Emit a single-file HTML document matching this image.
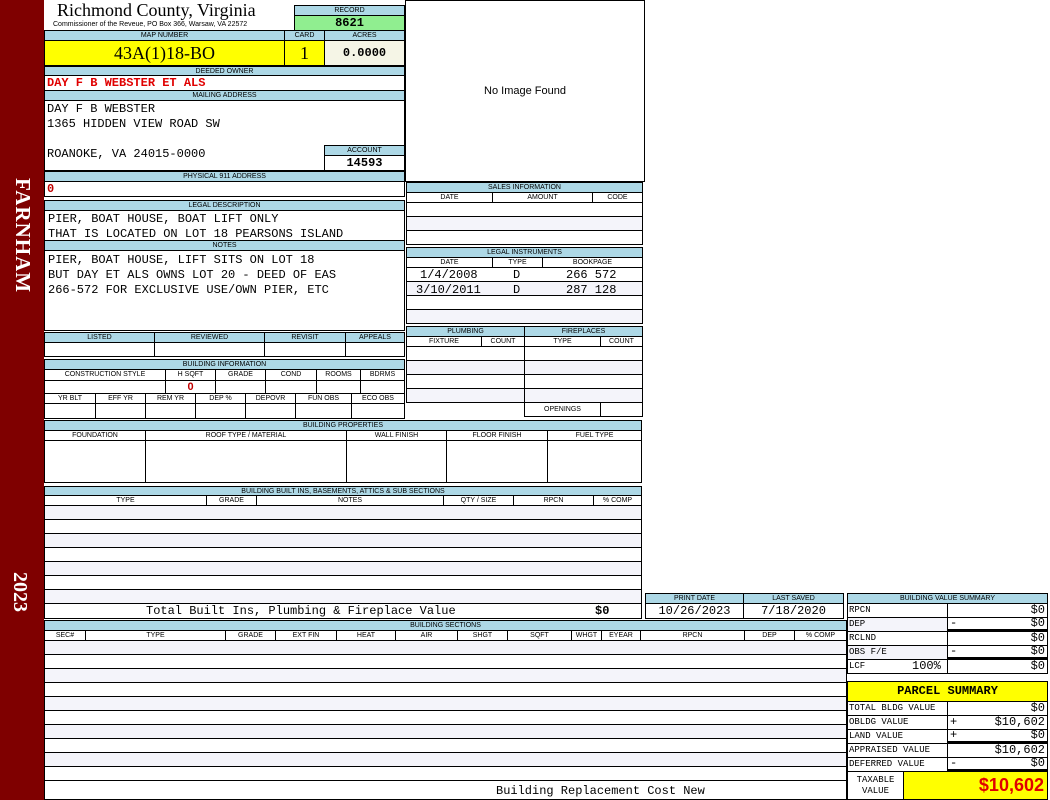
<!DOCTYPE html>
<html><head><meta charset="utf-8">
<style>
*{box-sizing:border-box;margin:0;padding:0}
body{width:1050px;height:800px;background:#fff;position:relative;overflow:hidden;font-family:"Liberation Sans",sans-serif}
div{position:absolute}
.b{border:1px solid #000;background:#fff}
.h{border:1px solid #000;background:#add8e6;font-size:7px;text-align:center;color:#000;line-height:10px;white-space:nowrap;overflow:hidden}
.s{border:1px solid #000;background:#fff;font-size:7px;text-align:center;line-height:10px;white-space:nowrap;overflow:hidden}
.g{background:#f4f4fa}
.m{font-family:"Liberation Mono",monospace;font-size:12px;white-space:pre;line-height:13px}
.r{text-align:right}
</style></head><body>
<div style="left:0;top:0;width:44px;height:800px;background:#7f0000"></div>
<div style="left:24px;top:178px;transform-origin:0 0;transform:rotate(90deg) translate(0,-11px);color:#fff;font-family:'Liberation Serif',serif;font-size:21px;font-weight:bold;letter-spacing:1px;white-space:nowrap">FARNHAM</div>
<div style="left:12px;top:572px;transform-origin:0 0;transform:rotate(90deg) translate(0,-19px);color:#fff;font-family:'Liberation Serif',serif;font-size:20px;font-weight:bold;white-space:nowrap">2023</div>

<div style="left:57px;top:0px;font-family:'Liberation Serif',serif;font-size:18px;line-height:20px">Richmond County, Virginia</div>
<div style="left:53px;top:21px;font-size:7px;line-height:8px;white-space:nowrap">Commissioner of the Reveue, PO Box 366, Warsaw, VA 22572</div>
<div class="h" style="left:294px;top:5px;width:111px;height:11px">RECORD</div>
<div class="b m" style="left:294px;top:15px;width:111px;height:16px;background:#90ee90;text-align:center;font-weight:bold;line-height:14px">8621</div>

<div class="h" style="left:44px;top:30px;width:241px;height:11px">MAP NUMBER</div>
<div class="h" style="left:284px;top:30px;width:41px;height:11px">CARD</div>
<div class="h" style="left:324px;top:30px;width:81px;height:11px">ACRES</div>
<div class="b" style="left:44px;top:40px;width:241px;height:26px;background:#ffff00;text-align:center;font-family:'Liberation Serif',serif;font-size:18px;line-height:24px">43A(1)18-BO</div>
<div class="b" style="left:284px;top:40px;width:41px;height:26px;background:#ffff00;text-align:center;font-family:'Liberation Serif',serif;font-size:18px;line-height:24px">1</div>
<div class="b m" style="left:324px;top:40px;width:81px;height:26px;background:#f5f5e6;text-align:center;font-weight:bold;line-height:24px">0.0000</div>

<div class="h" style="left:44px;top:66px;width:361px;height:10px;line-height:9px">DEEDED OWNER</div>
<div class="b m" style="left:44px;top:75px;width:361px;height:16px;color:#e00000;font-weight:bold;padding-left:2px;line-height:15px">DAY F B WEBSTER ET ALS</div>
<div class="h" style="left:44px;top:90px;width:361px;height:11px">MAILING ADDRESS</div>
<div class="b" style="left:44px;top:100px;width:361px;height:71px"></div>
<div class="m" style="left:47px;top:102px;line-height:15px">DAY F B WEBSTER
1365 HIDDEN VIEW ROAD SW

ROANOKE, VA 24015-0000</div>
<div class="h" style="left:324px;top:145px;width:81px;height:11px">ACCOUNT</div>
<div class="b m" style="left:324px;top:155px;width:81px;height:16px;text-align:center;font-weight:bold;line-height:14px">14593</div>
<div class="h" style="left:44px;top:171px;width:361px;height:11px">PHYSICAL 911 ADDRESS</div>
<div class="b m" style="left:44px;top:181px;width:361px;height:16px;color:#c00000;font-weight:bold;padding-left:2px;line-height:15px">0</div>

<div class="h" style="left:44px;top:200px;width:361px;height:11px">LEGAL DESCRIPTION</div>
<div class="b m" style="left:44px;top:210px;width:361px;height:31px;padding:1px 0 0 3px;line-height:15px">PIER, BOAT HOUSE, BOAT LIFT ONLY
THAT IS LOCATED ON LOT 18 PEARSONS ISLAND</div>
<div class="h" style="left:44px;top:240px;width:361px;height:11px">NOTES</div>
<div class="b m" style="left:44px;top:250px;width:361px;height:81px;padding:2px 0 0 3px;line-height:15px">PIER, BOAT HOUSE, LIFT SITS ON LOT 18
BUT DAY ET ALS OWNS LOT 20 - DEED OF EAS
266-572 FOR EXCLUSIVE USE/OWN PIER, ETC</div>

<div class="b" style="left:405px;top:0;width:240px;height:182px;text-align:center;font-size:11px;line-height:180px">No Image Found</div>

<div class="h" style="left:406px;top:182px;width:237px;height:11px">SALES INFORMATION</div>
<div class="s" style="left:406px;top:192px;width:87px;height:11px">DATE</div>
<div class="s" style="left:492px;top:192px;width:101px;height:11px">AMOUNT</div>
<div class="s" style="left:592px;top:192px;width:51px;height:11px">CODE</div>
<div class="b" style="left:406px;top:202px;width:237px;height:15px"></div>
<div class="b g" style="left:406px;top:216px;width:237px;height:15px"></div>
<div class="b" style="left:406px;top:230px;width:237px;height:15px"></div>

<div class="h" style="left:406px;top:247px;width:237px;height:11px">LEGAL INSTRUMENTS</div>
<div class="s" style="left:406px;top:257px;width:87px;height:11px">DATE</div>
<div class="s" style="left:492px;top:257px;width:51px;height:11px">TYPE</div>
<div class="s" style="left:542px;top:257px;width:101px;height:11px">BOOKPAGE</div>
<div class="b" style="left:406px;top:267px;width:237px;height:15px"></div>
<div class="b g" style="left:406px;top:281px;width:237px;height:15px"></div>
<div class="b" style="left:406px;top:295px;width:237px;height:15px"></div>
<div class="b g" style="left:406px;top:309px;width:237px;height:15px"></div>
<div class="m" style="left:420px;top:269px">1/4/2008</div><div class="m" style="left:513px;top:269px">D</div><div class="m" style="left:566px;top:269px">266 572</div>
<div class="m" style="left:416px;top:284px">3/10/2011</div><div class="m" style="left:513px;top:284px">D</div><div class="m" style="left:566px;top:284px">287 128</div>

<div class="h" style="left:406px;top:326px;width:119px;height:11px">PLUMBING</div>
<div class="h" style="left:524px;top:326px;width:119px;height:11px">FIREPLACES</div>
<div class="s" style="left:406px;top:336px;width:76px;height:11px">FIXTURE</div>
<div class="s" style="left:481px;top:336px;width:44px;height:11px">COUNT</div>
<div class="s" style="left:524px;top:336px;width:77px;height:11px">TYPE</div>
<div class="s" style="left:600px;top:336px;width:43px;height:11px">COUNT</div>
<div class="b" style="left:406px;top:346px;width:119px;height:15px"></div>
<div class="b g" style="left:406px;top:360px;width:119px;height:15px"></div>
<div class="b" style="left:406px;top:374px;width:119px;height:15px"></div>
<div class="b g" style="left:406px;top:388px;width:119px;height:15px"></div>
<div class="b" style="left:524px;top:346px;width:119px;height:15px"></div>
<div class="b g" style="left:524px;top:360px;width:119px;height:15px"></div>
<div class="b" style="left:524px;top:374px;width:119px;height:15px"></div>
<div class="b g" style="left:524px;top:388px;width:119px;height:15px"></div>
<div class="s" style="left:524px;top:402px;width:77px;height:15px;line-height:14px">OPENINGS</div>
<div class="b" style="left:600px;top:402px;width:43px;height:15px"></div>

<div class="h" style="left:44px;top:332px;width:111px;height:11px">LISTED</div>
<div class="h" style="left:154px;top:332px;width:111px;height:11px">REVIEWED</div>
<div class="h" style="left:264px;top:332px;width:82px;height:11px">REVISIT</div>
<div class="h" style="left:345px;top:332px;width:60px;height:11px">APPEALS</div>
<div class="b" style="left:44px;top:342px;width:111px;height:15px"></div>
<div class="b" style="left:154px;top:342px;width:111px;height:15px"></div>
<div class="b" style="left:264px;top:342px;width:82px;height:15px"></div>
<div class="b" style="left:345px;top:342px;width:60px;height:15px"></div>

<div class="h" style="left:44px;top:359px;width:361px;height:11px">BUILDING INFORMATION</div>
<div class="s" style="left:44px;top:369px;width:122px;height:12px">CONSTRUCTION STYLE</div>
<div class="s" style="left:165px;top:369px;width:51px;height:12px">H SQFT</div>
<div class="s" style="left:215px;top:369px;width:51px;height:12px">GRADE</div>
<div class="s" style="left:265px;top:369px;width:52px;height:12px">COND</div>
<div class="s" style="left:316px;top:369px;width:45px;height:12px">ROOMS</div>
<div class="s" style="left:360px;top:369px;width:45px;height:12px">BDRMS</div>
<div class="b" style="left:44px;top:380px;width:122px;height:14px"></div>
<div class="b" style="left:165px;top:380px;width:51px;height:14px;color:#c00000;font-weight:bold;font-size:11px;text-align:center;line-height:13px">0</div>
<div class="b" style="left:215px;top:380px;width:51px;height:14px"></div>
<div class="b" style="left:265px;top:380px;width:52px;height:14px"></div>
<div class="b" style="left:316px;top:380px;width:45px;height:14px"></div>
<div class="b" style="left:360px;top:380px;width:45px;height:14px"></div>
<div class="s" style="left:44px;top:393px;width:52px;height:11px">YR BLT</div>
<div class="s" style="left:95px;top:393px;width:51px;height:11px">EFF YR</div>
<div class="s" style="left:145px;top:393px;width:51px;height:11px">REM YR</div>
<div class="s" style="left:195px;top:393px;width:51px;height:11px">DEP %</div>
<div class="s" style="left:245px;top:393px;width:51px;height:11px">DEPOVR</div>
<div class="s" style="left:295px;top:393px;width:57px;height:11px">FUN OBS</div>
<div class="s" style="left:351px;top:393px;width:54px;height:11px">ECO OBS</div>
<div class="b" style="left:44px;top:403px;width:52px;height:16px"></div>
<div class="b" style="left:95px;top:403px;width:51px;height:16px"></div>
<div class="b" style="left:145px;top:403px;width:51px;height:16px"></div>
<div class="b" style="left:195px;top:403px;width:51px;height:16px"></div>
<div class="b" style="left:245px;top:403px;width:51px;height:16px"></div>
<div class="b" style="left:295px;top:403px;width:57px;height:16px"></div>
<div class="b" style="left:351px;top:403px;width:54px;height:16px"></div>

<div class="h" style="left:44px;top:420px;width:598px;height:11px">BUILDING PROPERTIES</div>
<div class="s" style="left:44px;top:430px;width:102px;height:11px">FOUNDATION</div>
<div class="s" style="left:145px;top:430px;width:202px;height:11px">ROOF TYPE / MATERIAL</div>
<div class="s" style="left:346px;top:430px;width:101px;height:11px">WALL FINISH</div>
<div class="s" style="left:446px;top:430px;width:102px;height:11px">FLOOR FINISH</div>
<div class="s" style="left:547px;top:430px;width:95px;height:11px">FUEL TYPE</div>
<div class="b" style="left:44px;top:440px;width:102px;height:43px"></div>
<div class="b" style="left:145px;top:440px;width:202px;height:43px"></div>
<div class="b" style="left:346px;top:440px;width:101px;height:43px"></div>
<div class="b" style="left:446px;top:440px;width:102px;height:43px"></div>
<div class="b" style="left:547px;top:440px;width:95px;height:43px"></div>

<div class="h" style="left:44px;top:486px;width:598px;height:10px;line-height:9px">BUILDING BUILT INS, BASEMENTS, ATTICS &amp; SUB SECTIONS</div>
<div class="s" style="left:44px;top:495px;width:163px;height:11px">TYPE</div>
<div class="s" style="left:206px;top:495px;width:51px;height:11px">GRADE</div>
<div class="s" style="left:256px;top:495px;width:188px;height:11px">NOTES</div>
<div class="s" style="left:443px;top:495px;width:71px;height:11px">QTY / SIZE</div>
<div class="s" style="left:513px;top:495px;width:81px;height:11px">RPCN</div>
<div class="s" style="left:593px;top:495px;width:49px;height:11px">% COMP</div>
<div class="b g" style="left:44px;top:505px;width:598px;height:15px"></div>
<div class="b" style="left:44px;top:519px;width:598px;height:15px"></div>
<div class="b g" style="left:44px;top:533px;width:598px;height:15px"></div>
<div class="b" style="left:44px;top:547px;width:598px;height:15px"></div>
<div class="b g" style="left:44px;top:561px;width:598px;height:15px"></div>
<div class="b" style="left:44px;top:575px;width:598px;height:15px"></div>
<div class="b g" style="left:44px;top:589px;width:598px;height:15px"></div>
<div class="b" style="left:44px;top:603px;width:598px;height:16px"></div>
<div class="m" style="left:146px;top:605px">Total Built Ins, Plumbing &amp; Fireplace Value</div>
<div class="m" style="left:595px;top:605px;font-weight:bold">$0</div>

<div class="h" style="left:645px;top:593px;width:99px;height:11px">PRINT DATE</div>
<div class="h" style="left:743px;top:593px;width:101px;height:11px">LAST SAVED</div>
<div class="b m" style="left:645px;top:603px;width:99px;height:16px;text-align:center;line-height:14px">10/26/2023</div>
<div class="b m" style="left:743px;top:603px;width:101px;height:16px;text-align:center;line-height:14px">7/18/2020</div>

<div class="h" style="left:44px;top:620px;width:803px;height:11px">BUILDING SECTIONS</div>
<div class="s" style="left:44px;top:630px;width:42px;height:11px">SEC#</div>
<div class="s" style="left:85px;top:630px;width:141px;height:11px">TYPE</div>
<div class="s" style="left:225px;top:630px;width:51px;height:11px">GRADE</div>
<div class="s" style="left:275px;top:630px;width:62px;height:11px">EXT FIN</div>
<div class="s" style="left:336px;top:630px;width:60px;height:11px">HEAT</div>
<div class="s" style="left:395px;top:630px;width:63px;height:11px">AIR</div>
<div class="s" style="left:457px;top:630px;width:51px;height:11px">SHGT</div>
<div class="s" style="left:507px;top:630px;width:65px;height:11px">SQFT</div>
<div class="s" style="left:571px;top:630px;width:31px;height:11px">WHGT</div>
<div class="s" style="left:601px;top:630px;width:40px;height:11px">EYEAR</div>
<div class="s" style="left:640px;top:630px;width:105px;height:11px">RPCN</div>
<div class="s" style="left:744px;top:630px;width:51px;height:11px">DEP</div>
<div class="s" style="left:794px;top:630px;width:53px;height:11px">% COMP</div>
<div class="b g" style="left:44px;top:640px;width:803px;height:15px"></div>
<div class="b" style="left:44px;top:654px;width:803px;height:15px"></div>
<div class="b g" style="left:44px;top:668px;width:803px;height:15px"></div>
<div class="b" style="left:44px;top:682px;width:803px;height:15px"></div>
<div class="b g" style="left:44px;top:696px;width:803px;height:15px"></div>
<div class="b" style="left:44px;top:710px;width:803px;height:15px"></div>
<div class="b g" style="left:44px;top:724px;width:803px;height:15px"></div>
<div class="b" style="left:44px;top:738px;width:803px;height:15px"></div>
<div class="b g" style="left:44px;top:752px;width:803px;height:15px"></div>
<div class="b" style="left:44px;top:766px;width:803px;height:15px"></div>
<div class="b" style="left:44px;top:780px;width:803px;height:20px"></div>
<div class="m" style="left:496px;top:785px">Building Replacement Cost New</div>

<div class="h" style="left:847px;top:593px;width:201px;height:11px">BUILDING VALUE SUMMARY</div>
<div class="b m" style="left:847px;top:603px;width:101px;height:15px;font-size:9px;padding-left:1px;line-height:13px">RPCN</div>
<div class="b m r" style="left:947px;top:603px;width:101px;height:15px;padding-right:2px;line-height:13px">$0</div>
<div class="b m g" style="left:847px;top:617px;width:101px;height:15px;font-size:9px;padding-left:1px;line-height:13px">DEP</div>
<div class="b m r" style="left:947px;top:617px;width:101px;height:15px;padding-right:2px;line-height:11px;border-bottom:3px solid #000">$0</div>
<div class="m" style="left:950px;top:617px">-</div>
<div class="b m" style="left:847px;top:631px;width:101px;height:15px;font-size:9px;padding-left:1px;line-height:13px">RCLND</div>
<div class="b m r" style="left:947px;top:631px;width:101px;height:15px;padding-right:2px;line-height:13px">$0</div>
<div class="b m g" style="left:847px;top:645px;width:101px;height:15px;font-size:9px;padding-left:1px;line-height:13px">OBS F/E</div>
<div class="b m r" style="left:947px;top:645px;width:101px;height:15px;padding-right:2px;line-height:11px;border-bottom:3px solid #000">$0</div>
<div class="m" style="left:950px;top:645px">-</div>
<div class="b m" style="left:847px;top:659px;width:101px;height:15px;font-size:9px;padding-left:1px;line-height:13px">LCF</div>
<div class="m" style="left:912px;top:660px">100%</div>
<div class="b m r" style="left:947px;top:659px;width:101px;height:15px;padding-right:2px;line-height:13px">$0</div>

<div class="b" style="left:847px;top:681px;width:201px;height:21px;background:#ffff00;text-align:center;font-family:'Liberation Mono',monospace;font-weight:bold;font-size:12px;line-height:19px">PARCEL SUMMARY</div>
<div class="b m" style="left:847px;top:701px;width:101px;height:15px;font-size:9px;padding-left:1px;line-height:13px">TOTAL BLDG VALUE</div>
<div class="b m r" style="left:947px;top:701px;width:101px;height:15px;padding-right:2px;line-height:13px">$0</div>
<div class="b m" style="left:847px;top:715px;width:101px;height:15px;font-size:9px;padding-left:1px;line-height:13px">OBLDG VALUE</div>
<div class="b m r" style="left:947px;top:715px;width:101px;height:15px;padding-right:2px;line-height:13px">$10,602</div>
<div class="m" style="left:950px;top:716px">+</div>
<div class="b m" style="left:847px;top:729px;width:101px;height:15px;font-size:9px;padding-left:1px;line-height:13px">LAND VALUE</div>
<div class="b m r" style="left:947px;top:729px;width:101px;height:15px;padding-right:2px;line-height:11px;border-bottom:3px solid #000">$0</div>
<div class="m" style="left:950px;top:729px">+</div>
<div class="b m" style="left:847px;top:743px;width:101px;height:15px;font-size:9px;padding-left:1px;line-height:13px">APPRAISED VALUE</div>
<div class="b m r" style="left:947px;top:743px;width:101px;height:15px;padding-right:2px;line-height:13px">$10,602</div>
<div class="b m" style="left:847px;top:757px;width:101px;height:15px;font-size:9px;padding-left:1px;line-height:13px">DEFERRED VALUE</div>
<div class="b m r" style="left:947px;top:757px;width:101px;height:15px;padding-right:2px;line-height:11px;border-bottom:3px solid #000">$0</div>
<div class="m" style="left:950px;top:757px">-</div>
<div class="b m" style="left:847px;top:771px;width:57px;height:29px;font-size:9px;text-align:center;line-height:11px;padding-top:3px">TAXABLE
VALUE</div>
<div class="b" style="left:903px;top:771px;width:145px;height:29px;background:#ffff00;color:#e00000;font-weight:bold;font-size:18px;text-align:right;padding-right:3px;line-height:26px">$10,602</div>
</body></html>
